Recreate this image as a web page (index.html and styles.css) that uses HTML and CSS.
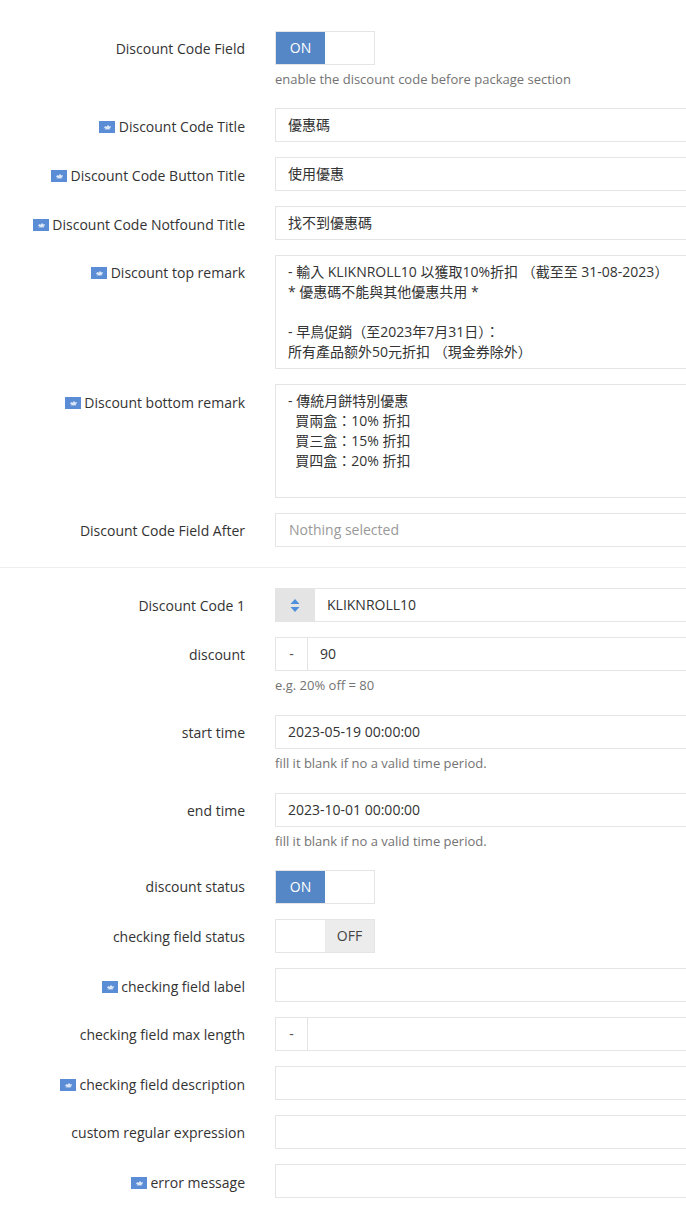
FILE: index.html
```html
<!DOCTYPE html>
<html lang="zh-Hant">
<head>
<meta charset="utf-8">
<title>Discount settings</title>
<link rel="stylesheet" href="styles.css">
</head>
<body>
<svg class="defs" width="0" height="0" aria-hidden="true"><defs>
<symbol id="flag" viewBox="0 0 16 12"><rect width="16" height="12" fill="#5b8dd6"/><path d="M5 6.5 6.5 5l1 .8L9 4l1.5 1.6L12 5l-.8 2.6c-1.600.9-3.800.9-5.200 0z" fill="#dbe6f6"/><path d="M5.500 8.400h5.500v.6H5.500z" fill="#a9c3ea"/></symbol>
</defs></svg>
<main class="page">
  <div class="row with-help"><div class="label">Discount Code Field</div><div class="control"><div class="toggle"><span class="on">ON</span><span class="blank"></span></div><p class="help">enable the discount code before package section</p></div></div>
  <div class="row"><div class="label flagged"><svg class="flag"><use href="#flag"/></svg>Discount Code Title</div><div class="control"><div class="field">優惠碼</div></div></div>
  <div class="row"><div class="label flagged"><svg class="flag"><use href="#flag"/></svg>Discount Code Button Title</div><div class="control"><div class="field">使用優惠</div></div></div>
  <div class="row"><div class="label flagged"><svg class="flag"><use href="#flag"/></svg>Discount Code Notfound Title</div><div class="control"><div class="field">找不到優惠碼</div></div></div>
  <div class="row"><div class="label"><svg class="flag"><use href="#flag"/></svg>Discount top remark</div><div class="control"><div class="field area">- 輸入 KLIKNROLL10 以獲取10%折扣 （截至至 31-08-2023）
* 優惠碼不能與其他優惠共用 *

- 早鳥促銷（至2023年7月31日）：
所有產品额外50元折扣 （現金券除外）</div></div></div>
  <div class="row"><div class="label flagged"><svg class="flag"><use href="#flag"/></svg>Discount bottom remark</div><div class="control"><div class="field area">- 傳統月餅特別優惠
  買兩盒：10% 折扣
  買三盒：15% 折扣
  買四盒：20% 折扣</div></div></div>
  <div class="row last"><div class="label">Discount Code Field After</div><div class="control"><div class="field placeholder">Nothing selected</div></div></div>
  <hr class="divider">
  <div class="row"><div class="label">Discount Code 1</div><div class="control"><div class="group"><span class="handle"><svg class="sort" viewBox="0 0 10 13"><path d="M5 0 9.500 5H.5zM5 13 .5 8h9z" fill="#4f8fdc"/></svg></span><div class="field grow">KLIKNROLL10</div></div></div></div>
  <div class="row with-help"><div class="label">discount</div><div class="control"><div class="group"><span class="addon">-</span><div class="field grow">90</div></div><p class="help">e.g. 20% off = 80</p></div></div>
  <div class="row with-help"><div class="label">start time</div><div class="control"><div class="field">2023-05-19 00:00:00</div><p class="help">fill it blank if no a valid time period.</p></div></div>
  <div class="row with-help"><div class="label">end time</div><div class="control"><div class="field">2023-10-01 00:00:00</div><p class="help">fill it blank if no a valid time period.</p></div></div>
  <div class="row"><div class="label toggle-label">discount status</div><div class="control"><div class="toggle"><span class="on">ON</span><span class="blank"></span></div></div></div>
  <div class="row"><div class="label">checking field status</div><div class="control"><div class="toggle"><span class="blank"></span><span class="off">OFF</span></div></div></div>
  <div class="row"><div class="label flagged"><svg class="flag"><use href="#flag"/></svg>checking field label</div><div class="control"><div class="field"></div></div></div>
  <div class="row"><div class="label">checking field max length</div><div class="control"><div class="group"><span class="addon">-</span><div class="field grow"></div></div></div></div>
  <div class="row"><div class="label flagged"><svg class="flag"><use href="#flag"/></svg>checking field description</div><div class="control"><div class="field"></div></div></div>
  <div class="row"><div class="label">custom regular expression</div><div class="control"><div class="field"></div></div></div>
  <div class="row"><div class="label flagged"><svg class="flag"><use href="#flag"/></svg>error message</div><div class="control"><div class="field"></div></div></div>
</main>
</body>
</html>
```
FILE: styles.css
```css
* { box-sizing: border-box; }
html, body { margin: 0; padding: 0; background: #fff; }
body {
  font-family: "Open Sans", "Noto Sans CJK TC", sans-serif;
  font-size: 14px;
  line-height: 20px;
  color: #333;
}
.defs { display: block; height: 0; }
.page { overflow: hidden; padding-top: 30.85px; height: 1206px; }
.row {
  display: grid;
  grid-template-columns: 245px 1fr;
  column-gap: 30px;
  margin-bottom: 15px;
}
.row.last { margin-bottom: 20px; }
.label {
  text-align: right;
  padding-top: 8px;
  color: #333;
  white-space: nowrap;
}
.toggle-label { padding-top: 7px; }
.flagged { padding-top: 9px; }
.flag {
  width: 16px;
  height: 12px;
  margin-right: 3.6px;
  vertical-align: -1px;
}
.control { min-width: 0; margin-right: -8px; }
.field {
  height: 34px;
  border: 1px solid #e5e5e5;
  padding: 6px 12px;
  background: #fff;
  color: #333;
  white-space: pre;
}
.area { height: 114px; padding: 6px 12px; }
.placeholder { color: #999; padding-left: 13px; }
.help {
  margin: 5px 0;
  font-size: 13px;
  line-height: 18.57px;
  color: #737373;
}
.toggle {
  display: flex;
  width: 100px;
  height: 34px;
  border: 1px solid #e5e5e5;
  background: #fff;
  text-align: center;
}
.toggle span { flex: 1; line-height: 32px; }
.on { background: #5586c5; color: #fff; }
.off { background: #ececec; color: #444; }
.group { display: flex; height: 34px; }
.grow { flex: 1; min-width: 0; }
.addon {
  width: 32px;
  flex: none;
  border: 1px solid #e5e5e5;
  border-right: 0;
  text-align: center;
  line-height: 32px;
  color: #555;
}
.handle {
  width: 40px;
  flex: none;
  background: #e4e4e4;
  display: flex;
  align-items: center;
  justify-content: center;
}
.handle + .field { border-left: 0; }
.sort { width: 10px; height: 13px; display: block; }
.divider {
  border: 0;
  border-top: 1px solid #eee;
  margin: 0 0 20px;
}
```
